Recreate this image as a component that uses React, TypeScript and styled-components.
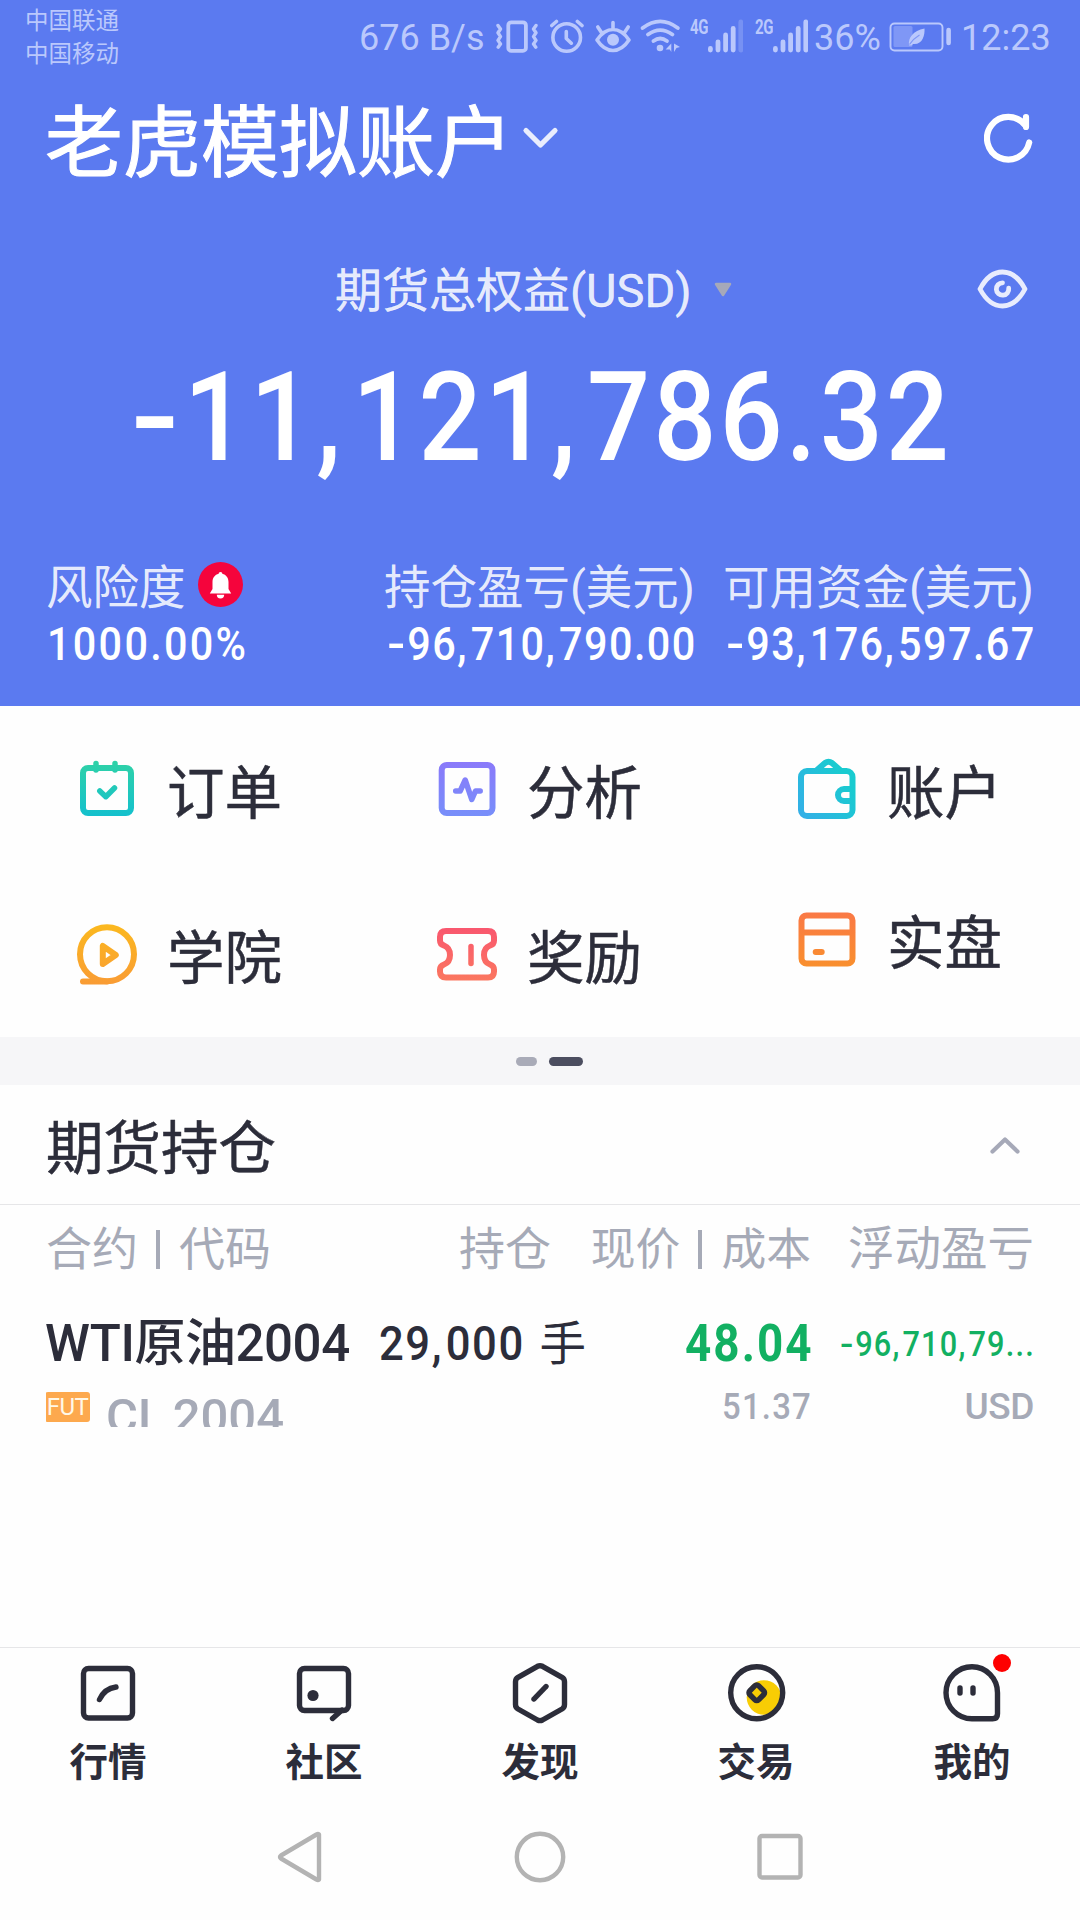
import React from "react";
import styled, { createGlobalStyle } from "styled-components";

const GlobalStyle = createGlobalStyle`
  * { box-sizing: border-box; }
  body {
    margin: 0;
    background: #fefefe;
    font-family: Roboto, "Noto Sans CJK SC", sans-serif;
  }
  svg { display: block; flex: none; }
`;

const INK = "#2c2d3a";
const MUTED = "#a6aab7";
const STATUS = "#bac8fc";
const GREEN = "#12b062";

const Screen = styled.div`
  width: 1080px;
  height: 1920px;
  display: flex;
  flex-direction: column;
  overflow: hidden;
  color: ${INK};
  white-space: nowrap;
`;

/* ---------- header ---------- */

const Header = styled.header`
  height: 706px;
  background: #5b7af0;
  color: #fff;
`;

const StatusBar = styled.div`
  height: 74px;
  display: flex;
  align-items: center;
  color: ${STATUS};
`;

const Carriers = styled.div`
  width: 335px;
  height: 74px;
  padding: 5px 0 0 25px;
  font-size: 23.5px;
  line-height: 33px;
`;

const StatusText = styled.span<{ $w: number; $ml?: number }>`
  width: ${(p) => p.$w}px;
  margin-left: ${(p) => p.$ml ?? 0}px;
  padding-top: 1px;
  font-size: 36px;
  line-height: 40px;
`;

const NetLabel = styled.span<{ $ml: number }>`
  width: 20px;
  margin: 0 0 20px ${(p) => p.$ml}px;
  font-size: 20px;
  font-weight: 700;
  line-height: 20px;
  letter-spacing: -0.6px;
  transform: scaleX(0.75);
  transform-origin: left;
`;

const StatusIcon = styled.svg<{ $ml?: number }>`
  margin-left: ${(p) => p.$ml ?? 0}px;
`;

const TitleRow = styled.div`
  height: 138px;
  padding: 0 46px 0 45px;
  display: flex;
  align-items: center;
`;

const Title = styled.h1`
  margin: 0;
  padding-top: 4px;
  font-size: 78px;
  font-weight: 400;
  line-height: 100px;
  -webkit-text-stroke: 1.1px currentColor;
`;

const TitleArrow = styled.svg`
  margin-left: 7px;
`;

const RefreshIcon = styled.svg`
  margin: 0 -4px 3px 0;
`;

const Spacer = styled.span`
  flex: 1;
`;

const EquityRow = styled.div`
  height: 159px;
  padding: 0 50px 2px 335px;
  display: flex;
  align-items: center;
`;

const EquityLabel = styled.span`
  width: 379px;
  font-size: 47px;
  line-height: 60px;
  color: rgba(255, 255, 255, 0.87);
  -webkit-text-stroke: 0.4px currentColor;
`;

/* Narrow figures: a condensed face with wider separators. */
const Figures = styled.span<{ $origin: "left" | "right" | "center"; $ls?: number }>`
  display: inline-block;
  transform: scaleX(0.89);
  transform-origin: ${(p) => p.$origin};
  letter-spacing: ${(p) => p.$ls ?? 0.035}em;
  margin-right: -${(p) => p.$ls ?? 0.035}em;
`;

const Separator = styled.span`
  letter-spacing: 0.1em;
`;

const Minus = styled.span`
  display: inline-block;
  margin-right: 0.11em;
  transform: scaleX(1.28);
  transform-origin: left;
`;

const Total = styled.div`
  height: 94px;
  line-height: 94px;
  text-align: center;
  font-size: 125px;
  font-weight: 500;
`;

const Stats = styled.div`
  padding: 95px 46px 0;
  display: grid;
  grid-template-columns: 320px 329px 339px;
`;

const Stat = styled.div<{ $right?: boolean }>`
  display: flex;
  flex-direction: column;
  align-items: ${(p) => (p.$right ? "flex-end" : "flex-start")};
`;

const StatLabel = styled.div`
  height: 56px;
  display: flex;
  align-items: center;
  gap: 12px;
  font-size: 46.5px;
  line-height: 56px;
  color: rgba(255, 255, 255, 0.87);
`;

const BellIcon = styled.svg`
  margin-bottom: 8px;
`;

const StatValue = styled.div`
  padding-left: 1px;
  font-size: 46.5px;
  font-weight: 500;
  line-height: 56px;
`;

/* ---------- shortcuts ---------- */

const Menu = styled.section`
  height: 331px;
  display: grid;
  grid-template-columns: repeat(3, 360px);
  grid-template-rows: 170px 161px;
`;

const MenuItem = styled.div<{ $raise?: number }>`
  display: flex;
  align-items: center;
  gap: 20px;
  padding: 0 0 ${(p) => p.$raise ?? 0}px 67px;
  font-size: 57.5px;
  line-height: 70px;
`;

const MenuLabel = styled.span`
  padding-top: 7px;
  -webkit-text-stroke: 0.5px currentColor;
`;

const Pager = styled.div`
  height: 48px;
  background: #f6f6f8;
  display: flex;
  align-items: center;
  justify-content: center;
  gap: 12px;
  padding: 1px 0 0 18px;
`;

const Dot = styled.span<{ $active?: boolean }>`
  width: ${(p) => (p.$active ? 34 : 21)}px;
  height: 9px;
  border-radius: 5px;
  background: ${(p) => (p.$active ? "#4c4e60" : "#a9abb8")};
`;

/* ---------- positions ---------- */

const Section = styled.section`
  flex: 1;
`;

const SectionHead = styled.div`
  height: 120px;
  padding: 8px 48px 0 46px;
  border-bottom: 1px solid #e6e6e8;
  display: flex;
  align-items: center;
  justify-content: space-between;
`;

const SectionTitle = styled.h2`
  margin: 0;
  padding-top: 2px;
  font-size: 57.5px;
  font-weight: 400;
  line-height: 70px;
  -webkit-text-stroke: 0.5px currentColor;
`;

const Columns = styled.div`
  padding: 0 46px;
  display: grid;
  grid-template-columns: 310px 230px 225px 223px;
`;

const TableHead = styled(Columns)`
  height: 87px;
  color: ${MUTED};
  font-size: 46px;
  line-height: 89px;
`;

const HeadCell = styled.span<{ $pr?: number; $fs?: number }>`
  text-align: right;
  padding-right: ${(p) => p.$pr ?? 0}px;
  font-size: ${(p) => p.$fs ?? 46}px;
  &:first-child {
    text-align: left;
  }
`;

const Bar = styled.i`
  display: inline-block;
  width: 4px;
  height: 39px;
  margin: 0 19px 0 18px;
  background: currentColor;
  vertical-align: -4px;
`;

const PositionRow = styled(Columns)`
  height: 96px;
  padding-top: 8px;
  line-height: 88px;
`;

const Name = styled.span`
  font-size: 51px;
  font-weight: 500;
  letter-spacing: -0.45px;
  margin-left: -1px;
`;

const Quantity = styled.span`
  font-size: 49px;
  font-weight: 500;
  text-align: right;
`;

const Unit = styled.span`
  margin-left: 17px;
  font-size: 46.5px;
  font-weight: 400;
`;

const Price = styled.span`
  font-size: 51.5px;
  font-weight: 700;
  text-align: right;
  color: ${GREEN};
`;

const Profit = styled.span`
  font-size: 34.5px;
  font-weight: 500;
  text-align: right;
  color: ${GREEN};
`;

const DetailRow = styled(Columns)`
  color: ${MUTED};
`;

const Code = styled.div`
  grid-column: span 2;
  height: 39px;
  overflow: hidden;
  display: flex;
  align-items: flex-start;
  font-size: 49px;
  font-weight: 500;
  line-height: 57px;
  word-spacing: -4px;
`;

const Badge = styled.span`
  width: 45px;
  height: 30px;
  margin: 4px 16px 0 -1px;
  border-radius: 3px;
  background: #fda94e;
  color: #fff8e8;
  font-size: 24px;
  font-weight: 400;
  line-height: 30px;
  letter-spacing: -0.6px;
  text-align: center;
`;

const Detail = styled.span`
  font-size: 37px;
  line-height: 37px;
  font-weight: 500;
  text-align: right;
`;

const Currency = styled(Detail)`
  letter-spacing: -0.4px;
`;

/* ---------- bottom ---------- */

const TabBar = styled.nav`
  height: 147px;
  border-top: 1px solid #e6e6e8;
  display: grid;
  grid-template-columns: repeat(5, 216px);
`;

const Tab = styled.div`
  position: relative;
  display: flex;
  flex-direction: column;
  align-items: center;
  padding-top: 10px;
  font-size: 38.5px;
  font-weight: 700;
  line-height: 44px;
  gap: 13px;
`;

const Unread = styled.span`
  position: absolute;
  left: 129px;
  top: 6px;
  width: 18px;
  height: 18px;
  border-radius: 50%;
  background: #fe0000;
`;

const SystemBar = styled.div`
  height: 126px;
  display: flex;
  align-items: center;
  justify-content: center;
  gap: 180px;
`;

function Amount({ value, origin = "right", ls }: { value: string; origin?: "left" | "right" | "center"; ls?: number }) {
  return (
    <Figures $origin={origin} $ls={ls}>
      {value.split(/([-,])/).map((part, i) => {
        if (part === "-") return <Minus key={i}>-</Minus>;
        if (part === ",") return <Separator key={i}>,</Separator>;
        return part;
      })}
    </Figures>
  );
}

const barHeights = [6.5, 13, 20, 26.5, 33];

function Signal({ ml, weak }: { ml: number; weak?: boolean }) {
  return (
    <StatusIcon $ml={ml} width="35" height="40" viewBox="0 0 35 40" stroke={STATUS} strokeWidth="4.8" strokeLinecap="round">
      {barHeights.map((h, i) => (
        <path
          key={h}
          d={`M${2.4 + i * 7.6} ${37.9 - h}V33`}
          opacity={weak && i === 4 ? 0.3 : 1}
        />
      ))}
    </StatusIcon>
  );
}

function StatusIcons() {
  return (
    <>
      <StatusIcon $ml={11} width="42" height="40" viewBox="496 17 42 40" fill="none" stroke={STATUS} strokeLinejoin="round" strokeLinecap="round">
        <rect x="508.3" y="22.3" width="17.6" height="28.6" rx="3" strokeWidth="3.8" />
        <path strokeWidth="3.4" d="M498 25.500l2.500 3.500-2.500 3.800 2.500 3.800-2.500 3.800 2.500 3.600-2.300 3.200M536 25.500l-2.500 3.500 2.500 3.800-2.500 3.800 2.500 3.800-2.500 3.600 2.300 3.200" />
      </StatusIcon>
      <StatusIcon $ml={12} width="34" height="40" viewBox="550 17 34 40" fill="none" stroke={STATUS} strokeWidth="3.6" strokeLinecap="round" strokeLinejoin="round">
        <circle cx="566.7" cy="37.5" r="13.8" />
        <path d="M566.3 31.5v7l5 4.7M551.8 25.5l4.6-4M582 25.5l-4.6-4" />
      </StatusIcon>
      <StatusIcon $ml={10} width="38" height="40" viewBox="594 17 38 40" fill="none" stroke={STATUS} strokeWidth="3.6" strokeLinecap="round" strokeLinejoin="round">
        <path d="M597 40q7-10.5 16-10.5T629 40q-7 10.5-16 10.5T597 40zM613 22.5v7M597.8 27l4 6M628.2 27l-4 6" />
        <circle cx="613" cy="39.7" r="6" fill={STATUS} stroke="none" />
      </StatusIcon>
      <StatusIcon $ml={8} width="40" height="40" viewBox="640 17 40 40" fill="none" stroke={STATUS} strokeWidth="3.8" strokeLinecap="round">
        <path d="M642.6 28q17.6-13.2 35.2 0M648 34.500q12.200-8.800 24.400 0M653.500 41q6.700-5 13.400 0" />
        <circle cx="660" cy="48" r="3.3" fill={STATUS} stroke="none" />
        <path d="M671.3 43.500v8.500l-1.500-2.500h-4.200zM674 43.500l6 3.500-3.500 1-2.500 4z" fill={STATUS} stroke="none" />
      </StatusIcon>
      <NetLabel $ml={10}>4G</NetLabel>
      <Signal ml={-2} weak />
      <NetLabel $ml={12}>2G</NetLabel>
      <Signal ml={-2} />
    </>
  );
}

function Battery() {
  return (
    <StatusIcon $ml={9} width="62" height="40" viewBox="889 17 62 40" fill="none">
      <rect x="890.5" y="23.5" width="52" height="27" rx="4" stroke={STATUS} strokeWidth="1.9" />
      <rect x="893.5" y="26" width="19" height="21" rx="1.5" fill="#7f97f6" />
      <path d="M924.500 28.500c.5 7-2 16.500-11.500 15.500l-1.500 1.500h-2.500c-1-8 4-14.500 15.500-17z" fill={STATUS} />
      <path d="M909.500 44.500q4-6 10-9.500" stroke="#7f97f6" strokeWidth="1.2" />
      <path d="M948.600 30v13" stroke={STATUS} strokeWidth="4.6" strokeLinecap="round" />
    </StatusIcon>
  );
}

function Gradient({ id, from, to, side }: { id: string; from: string; to: string; side?: boolean }) {
  return (
    <linearGradient id={id} gradientUnits="userSpaceOnUse" x1={side ? 10 : 35} y1={side ? 60 : 5} x2={side ? 60 : 35} y2={side ? 25 : 65}>
      <stop offset="0" stopColor={from} />
      <stop offset="1" stopColor={to} />
    </linearGradient>
  );
}

function MenuIcon({ id, from, to, side, children }: { id: string; from: string; to: string; side?: boolean; children: React.ReactNode }) {
  return (
    <svg width="80" height="72" viewBox="0 0 80 72" fill="none" stroke={`url(#${id})`} strokeWidth="6" strokeLinecap="round" strokeLinejoin="round">
      <defs>
        <Gradient id={id} from={from} to={to} side={side} />
      </defs>
      {children}
    </svg>
  );
}

function TabIcon({ children }: { children: React.ReactNode }) {
  return (
    <svg width="70" height="70" viewBox="0 0 70 70" fill="none" stroke={INK} strokeWidth="5.4" strokeLinecap="round" strokeLinejoin="round">
      {children}
    </svg>
  );
}

export default function App() {
  return (
    <Screen>
      <GlobalStyle />
      <Header>
        <StatusBar>
          <Carriers>
            <div>中国联通</div>
            <div>中国移动</div>
          </Carriers>
          <StatusText $w={126} $ml={24}>676 B/s</StatusText>
          <StatusIcons />
          <StatusText $w={66} $ml={6}>36%</StatusText>
          <Battery />
          <StatusText $w={88} $ml={10}>12:23</StatusText>
        </StatusBar>

        <TitleRow>
          <Title>老虎模拟账户</Title>
          <TitleArrow width="40" height="40" viewBox="0 0 40 40" fill="none" stroke="#e9edfd" strokeWidth="5.2" strokeLinecap="round" strokeLinejoin="round">
            <path d="M6 7.500L20.500 22 35 7.500" />
          </TitleArrow>
          <Spacer />
          <RefreshIcon width="54" height="60" viewBox="0 0 54 60" fill="none" stroke="#fff" strokeWidth="6.2" strokeLinecap="round" strokeLinejoin="round">
            <path d="M45.200 30.500A21.300 21.300 0 1 1 41 13M42 5v10" />
          </RefreshIcon>
        </TitleRow>

        <EquityRow>
          <EquityLabel>期货总权益(USD)</EquityLabel>
          <svg width="18" height="20" viewBox="0 0 18 20">
            <path d="M2 3h14l-7 11z" fill="#a6a9b9" stroke="#a6a9b9" strokeWidth="2.5" strokeLinejoin="round" />
          </svg>
          <Spacer />
          <svg width="54" height="50" viewBox="0 0 54 50" fill="none" stroke="#e8ecfd" strokeWidth="4.8" strokeLinecap="round" strokeLinejoin="round">
            <path d="M4 23Q13 6 26.500 6T49 23Q40 40 26.500 40T4 23z" />
            <path d="M26.500 16.800a6.200 6.200 0 1 0 6.200 5.400" />
          </svg>
        </EquityRow>

        <Total>
          <Amount value="-11,121,786.32" origin="center" ls={0.027} />
        </Total>

        <Stats>
          <Stat>
            <StatLabel>
              风险度
              <BellIcon width="45" height="45" viewBox="0 0 45 45">
                <circle cx="22.5" cy="22.5" r="22.5" fill="#f5043c" />
                <path d="M22.500 10c1.200 0 1.800.8 1.800 1.800 3.900 1 6.200 4 6.200 8.200v7l2.700 4.500H11.800l2.700-4.500v-7c0-4.200 2.300-7.200 6.200-8.200 0-1 .6-1.800 1.800-1.800zM18.800 32.800h7.400a3.700 3.700 0 0 1-7.400 0z" fill="#fff" />
              </BellIcon>
            </StatLabel>
            <StatValue><Amount value="1000.00%" origin="left" ls={0.055} /></StatValue>
          </Stat>
          <Stat $right>
            <StatLabel>持仓盈亏(美元)</StatLabel>
            <StatValue><Amount value="-96,710,790.00" /></StatValue>
          </Stat>
          <Stat $right>
            <StatLabel>可用资金(美元)</StatLabel>
            <StatValue><Amount value="-93,176,597.67" /></StatValue>
          </Stat>
        </Stats>
      </Header>

      <Menu>
        <MenuItem>
          <MenuIcon id="orders" from="#30d2a6" to="#12bfd0">
            <rect x="16" y="13" width="48" height="45" rx="5" />
            <path d="M29 8.500v6.500M48 8.500v6.500M32.800 36l6 5.700 8.700-8.700" strokeWidth="5.5" />
          </MenuIcon>
          <MenuLabel>订单</MenuLabel>
        </MenuItem>
        <MenuItem>
          <MenuIcon id="analysis" from="#8b79fa" to="#7690fa">
            <rect x="14.7" y="10" width="50.8" height="48" rx="5" />
            <path d="M28.700 36h4.500l5-11 6.600 19.500 3.700-8.500h4.700" strokeWidth="5.5" />
          </MenuIcon>
          <MenuLabel>分析</MenuLabel>
        </MenuItem>
        <MenuItem>
          <MenuIcon id="account" side from="#35aee8" to="#19cbd0">
            <rect x="14" y="16" width="51.5" height="45" rx="6" />
            <path d="M30 15l8-7q3.500-2.500 7 0l8 7M65 34h-8a6 6 0 0 0 0 12h8" />
          </MenuIcon>
          <MenuLabel>账户</MenuLabel>
        </MenuItem>
        <MenuItem>
          <MenuIcon id="academy" from="#fbb81f" to="#f99b35">
            <circle cx="40" cy="33.3" r="27" />
            <path d="M16 60.500h24M35.800 25v18l13-9z" />
          </MenuIcon>
          <MenuLabel>学院</MenuLabel>
        </MenuItem>
        <MenuItem>
          <MenuIcon id="reward" from="#f9566f" to="#fb7a5e">
            <path d="M19 10h42q6 0 6 6v3.500q0 4-4 5c-8 3-8 16 0 19q4 1.500 4 5v2q0 6-6 6h-42q-6 0-6-6v-2q0-3.500 4-5c8-3 8-16 0-19q-4-1-4-5v-3.500q0-6 6-6z" />
            <path d="M44 25.500v17" strokeWidth="5.5" />
          </MenuIcon>
          <MenuLabel>奖励</MenuLabel>
        </MenuItem>
        <MenuItem $raise={30}>
          <MenuIcon id="live" from="#fa7846" to="#f9912c">
            <rect x="14.5" y="9.5" width="51" height="48" rx="5" />
            <path d="M15 26.500h50.100M28.700 46h6" />
          </MenuIcon>
          <MenuLabel>实盘</MenuLabel>
        </MenuItem>
      </Menu>

      <Pager>
        <Dot />
        <Dot $active />
      </Pager>

      <Section>
        <SectionHead>
          <SectionTitle>期货持仓</SectionTitle>
          <svg width="44" height="40" viewBox="0 0 44 40" fill="none" stroke="#a6a9b8" strokeWidth="4.2" strokeLinecap="round" strokeLinejoin="round">
            <path d="M4.500 22.500L17 10.500 29.500 22.500" />
          </svg>
        </SectionHead>
        <TableHead>
          <HeadCell>合约<Bar />代码</HeadCell>
          <HeadCell $pr={35}>持仓</HeadCell>
          <HeadCell $fs={44.8}>现价<Bar />成本</HeadCell>
          <HeadCell $fs={46.5}>浮动盈亏</HeadCell>
        </TableHead>
        <PositionRow>
          <Name>WTI原油2004</Name>
          <Quantity><Amount value="29,000" /><Unit>手</Unit></Quantity>
          <Price><Amount value="48.04" ls={0.045} /></Price>
          <Profit><Amount value="-96,710,79..." ls={0.04} /></Profit>
        </PositionRow>
        <DetailRow>
          <Code>
            <Badge>FUT</Badge>
            CL 2004
          </Code>
          <Detail><Amount value="51.37" /></Detail>
          <Currency>USD</Currency>
        </DetailRow>
      </Section>

      <TabBar>
        <Tab>
          <TabIcon>
            <rect x="10.5" y="10.5" width="49" height="49.5" rx="5" />
            <path d="M26.500 41.500q5-11 16.500-12.500" />
          </TabIcon>
          行情
        </Tab>
        <Tab>
          <TabIcon>
            <rect x="10.5" y="10.5" width="49" height="42" rx="5" />
            <path d="M53 52l-9.500 8.500" />
            <circle cx="24" cy="37.5" r="5.6" fill={INK} stroke="none" />
          </TabIcon>
          社区
        </Tab>
        <Tab>
          <TabIcon>
            <path d="M32.500 8.300q2.500-1.200 5 0l19.500 11q2.500 1.500 2.500 4.500v22.700q0 3-2.500 4.500l-19.500 11q-2.500 1.200-5 0L13 51q-2.500-1.500-2.500-4.500V23.800q0-3 2.500-4.500z" />
            <path d="M29 41L41 28.500" />
          </TabIcon>
          发现
        </Tab>
        <Tab>
          <TabIcon>
            <circle cx="43" cy="39.5" r="17.3" fill="#f8cd04" stroke="none" />
            <circle cx="35.7" cy="34.7" r="26" />
            <rect x="29.5" y="28.5" width="12.5" height="12.5" rx="2.5" transform="rotate(45 35.75 34.75)" />
          </TabIcon>
          交易
        </Tab>
        <Tab>
          <TabIcon>
            <path d="M35 8.700a26 26 0 0 0 0 52h20.500q5 0 5-5V34.700A25.500 26 0 0 0 35 8.700z" />
            <path d="M23 30v5M36 30v5" />
          </TabIcon>
          我的
          <Unread />
        </Tab>
      </TabBar>

      <SystemBar>
        <svg width="60" height="60" viewBox="0 0 60 60" fill="none" stroke="#b3b3b3" strokeWidth="4.4" strokeLinejoin="round">
          <path d="M49 7.500v45q-1 .8-2.500 0L11 31.500q-2-1.500 0-3L46.500 7.500q1.500-.8 2.500 0z" />
        </svg>
        <svg width="60" height="60" viewBox="0 0 60 60" fill="none" stroke="#b3b3b3" strokeWidth="4.4">
          <circle cx="30" cy="30" r="23.2" />
        </svg>
        <svg width="60" height="60" viewBox="0 0 60 60" fill="none" stroke="#b3b3b3" strokeWidth="4.4">
          <rect x="9.5" y="9" width="41" height="41.5" rx="2.5" />
        </svg>
      </SystemBar>
    </Screen>
  );
}
